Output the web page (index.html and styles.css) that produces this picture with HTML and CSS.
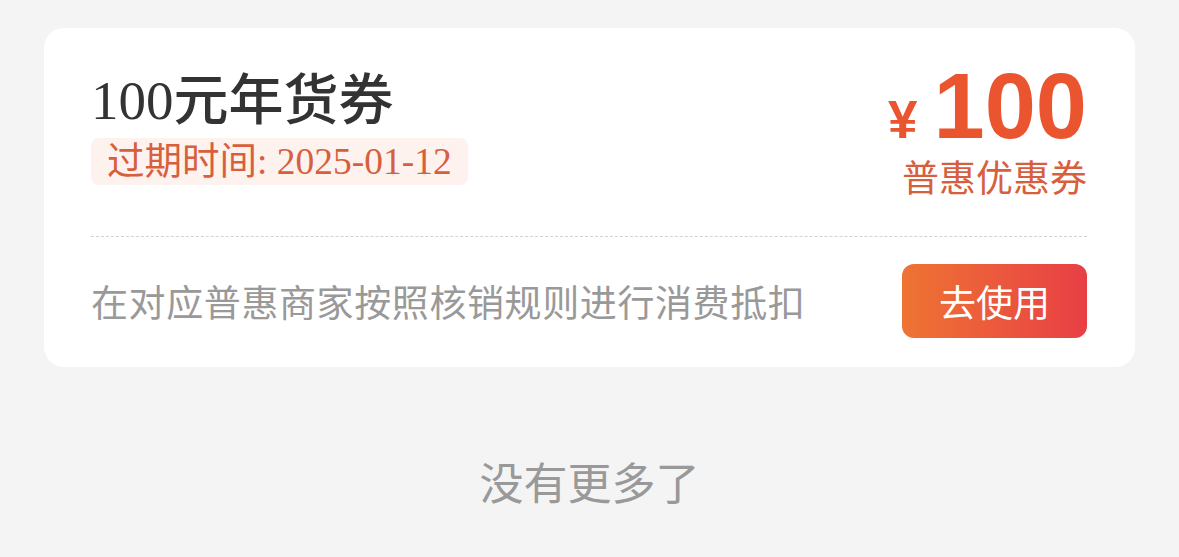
FILE: index.html
```html
<!DOCTYPE html>
<html lang="zh-CN">
<head>
    <meta charset="UTF-8">
    <meta name="viewport" content="width=device-width, initial-scale=1.0">
    <title>我的优惠券</title>
    <link rel="stylesheet" href="styles.css">
</head>
<body>
    <div class="coupon-list">
        <div class="coupon">
            <div class="coupon-top">
                <div class="coupon-info">
                    <h1 class="coupon-title">100元年货券</h1>
                    <span class="coupon-expire">过期时间: 2025-01-12</span>
                </div>
                <div class="coupon-price">
                    <div class="price"><span class="price-sign">¥</span><span class="price-num">100</span></div>
                    <div class="coupon-type">普惠优惠券</div>
                </div>
            </div>
            <div class="coupon-bottom">
                <p class="coupon-desc">在对应普惠商家按照核销规则进行消费抵扣</p>
                <button class="coupon-btn">去使用</button>
            </div>
        </div>
        <div class="no-more">没有更多了</div>
    </div>
</body>
</html>
```

FILE: styles.css
```css
* {
    margin: 0;
    padding: 0;
    box-sizing: border-box;
}

body {
    font-family: "Noto Sans CJK SC", sans-serif;
    background-color: #f4f4f4;
    height: 100vh;
}

.coupon-list {
    padding: 28px 44px 0 44px;
}

.coupon {
    background: #fff;
    border-radius: 20px;
    padding: 38px 48px 29px 47px;
}

.coupon-top {
    display: flex;
    justify-content: space-between;
    align-items: flex-start;
    padding-bottom: 38px;
    border-bottom: 1px dashed #d2d2d2;
}

.coupon-info {
    display: flex;
    flex-direction: column;
    align-items: flex-start;
}

.coupon-title {
    font-family: "Liberation Serif", "Noto Sans CJK SC", serif;
    font-size: 55px;
    font-weight: 500;
    line-height: 62px;
    color: #333;
    margin-top: 4px;
}

.coupon-expire {
    font-family: "Liberation Serif", "Noto Sans CJK SC", serif;
    font-size: 37.5px;
    line-height: 47px;
    color: #d85f3e;
    background: #fdf2ed;
    border-radius: 8px;
    padding: 0 16px;
    margin-top: 6px;
}

.coupon-price {
    display: flex;
    flex-direction: column;
    align-items: flex-end;
}

.price {
    display: flex;
    align-items: baseline;
    font-family: "Liberation Sans", sans-serif;
    font-weight: bold;
    color: #ea5530;
}

.price-sign {
    font-size: 53px;
    line-height: 1;
    margin-right: 16px;
}

.price-num {
    font-size: 92px;
    line-height: 80px;
}

.coupon-type {
    font-size: 37px;
    line-height: 44px;
    color: #d85f3e;
    margin-top: 8px;
}

.coupon-bottom {
    display: flex;
    justify-content: space-between;
    align-items: center;
    padding-top: 27px;
}

.coupon-desc {
    font-size: 37px;
    color: #999;
    letter-spacing: 0.6px;
}

.coupon-btn {
    width: 185px;
    height: 74px;
    border: none;
    border-radius: 12px;
    background: linear-gradient(to right, #ee7433, #e83f45);
    color: #fff;
    font-family: "Noto Sans CJK SC", sans-serif;
    font-size: 37px;
    cursor: pointer;
}

.no-more {
    text-align: center;
    font-size: 44px;
    color: #999;
    margin-top: 82px;
}
```
